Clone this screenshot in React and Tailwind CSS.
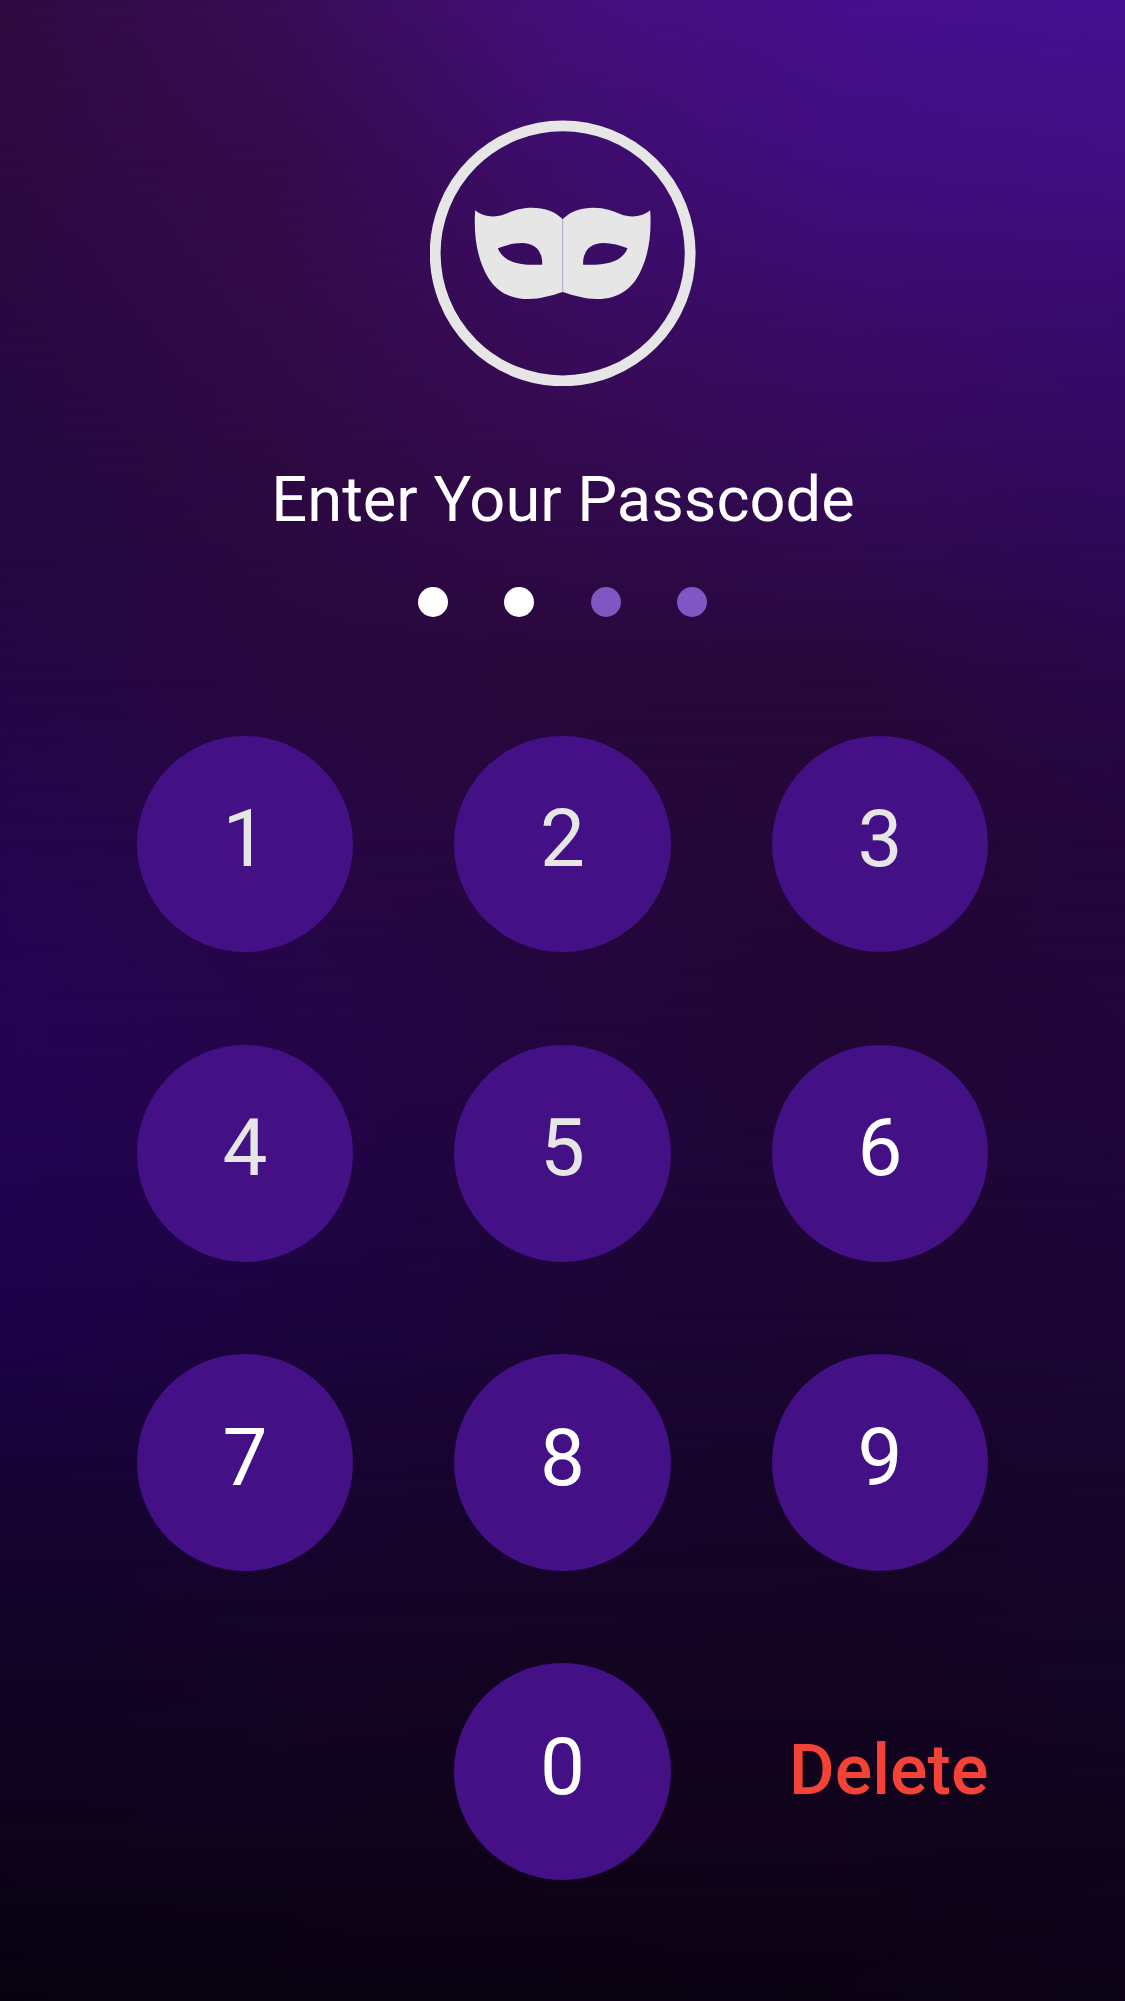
const DIGITS = ["1", "2", "3", "4", "5", "6", "7", "8", "9"];
const DIM_DIGITS = ["1", "2", "3", "4", "5"];

// Colour mesh of the backdrop: each row blends into the one below it.
const STOPS_X = [0, 25, 50, 75, 100];
const MESH = [
  { y: 0, colors: ["#2f0a40", "#390d56", "#440f7b", "#460e8c", "#441090"] },
  { y: 160, colors: ["#2d0941", "#350a4b", "#3d0d6c", "#410d80", "#400f83"] },
  { y: 300, colors: ["#290841", "#320a47", "#390c5e", "#3b0c6b", "#390b70"] },
  { y: 440, colors: ["#250840", "#2e0943", "#350a50", "#360a5c", "#330962"] },
  { y: 560, colors: ["#240840", "#2a0840", "#2e0946", "#2e094c", "#2c0856"] },
  { y: 680, colors: ["#240646", "#28073f", "#28083b", "#27083a", "#280748"] },
  { y: 840, colors: ["#24054e", "#260744", "#26073d", "#240736", "#24063c"] },
  { y: 1020, colors: ["#240455", "#250549", "#23063e", "#220635", "#22063c"] },
  { y: 1180, colors: ["#210351", "#200447", "#1f063b", "#1e0635", "#1f053a"] },
  { y: 1340, colors: ["#1c0248", "#1c043e", "#1b0536", "#1b0531", "#1c0636"] },
  { y: 1500, colors: ["#160333", "#170431", "#17042c", "#160428", "#17052b"] },
  { y: 1680, colors: ["#110324", "#130425", "#130422", "#130421", "#130526"] },
  { y: 1850, colors: ["#0d031a", "#0f031c", "#10031b", "#10031a", "#0f031b"] },
  { y: 2001, colors: ["#080210", "#090211", "#0a0212", "#0b0214", "#0d0318"] },
];

function Backdrop() {
  return (
    <div aria-hidden="true" className="absolute inset-0">
      {MESH.map((row, i) => {
        const stops = row.colors.map((c, k) => `${c} ${STOPS_X[k]}%`).join(", ");
        const fade =
          i === 0
            ? "none"
            : `linear-gradient(to bottom, transparent ${MESH[i - 1].y}px, black ${row.y}px)`;
        return (
          <div
            key={row.y}
            className="absolute inset-0"
            style={{
              backgroundImage: `linear-gradient(to right, ${stops})`,
              maskImage: fade,
            }}
          />
        );
      })}
    </div>
  );
}

function MaskLogo() {
  const half =
    "M427.5 328C404 304 372 293.500 335 293.500C300 293.500 278 303 253 313C228 323 190 323 165 301C160 370 169 448 206 506C238 555 284 567 325 567C360 567 394 557 427.500 546ZM233 415C256 406 279 399 305 399C346 399 368 425 366 464C303 467 251 459 233 415Z";
  return (
    <svg viewBox="29.500 30 798 798" className="h-[266px] w-[266px]" fill="#e6e6e6">
      <circle cx="427.5" cy="430" r="382.5" fill="none" stroke="#e6e6e6" strokeWidth="32.5" />
      <path d={half} fillRule="evenodd" />
      <path d={half} fillRule="evenodd" transform="translate(855 0) scale(-1 1)" />
      <path d="M427.5 329V546" stroke="#b8aec8" strokeWidth="3" />
    </svg>
  );
}

function Key({ children, dim }) {
  return (
    <button
      className={`flex h-[216.700px] w-[216.700px] items-center justify-center rounded-full bg-[#431086] pb-[9.500px] text-[80px] leading-none ${
        dim ? "text-[#e6e6e6]" : "text-white"
      }`}
    >
      {children}
    </button>
  );
}

export default function App() {
  return (
    <main className="relative isolate h-[2001px] w-[1125px] overflow-hidden bg-black font-['Roboto',sans-serif]">
      <Backdrop />
      <div className="relative flex flex-col items-center pt-[120px]">
        <MaskLogo />
        <h1 className="mt-[76px] ml-[1px] text-[63.200px] leading-[75px] whitespace-nowrap text-white">
          Enter Your Passcode
        </h1>
        <div className="mt-[50px] flex gap-[56.600px]">
          <span className="size-[30px] rounded-full bg-white" />
          <span className="size-[30px] rounded-full bg-white" />
          <span className="size-[30px] rounded-full bg-[#7e57c2]" />
          <span className="size-[30px] rounded-full bg-[#7e57c2]" />
        </div>
        <div className="mt-[118.600px] grid grid-cols-[repeat(3,216.700px)] gap-x-[100.900px] gap-y-[92.600px]">
          {DIGITS.map((d) => (
            <Key key={d} dim={DIM_DIGITS.includes(d)}>
              {d}
            </Key>
          ))}
          <div />
          <Key>0</Key>
          <button className="flex items-center justify-end pb-[3px] text-[70px] leading-none font-medium text-[#f44336]">
            Delete
          </button>
        </div>
      </div>
    </main>
  );
}
